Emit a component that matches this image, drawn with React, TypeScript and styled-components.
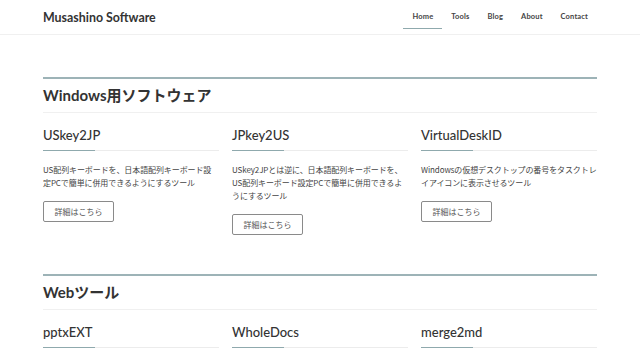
import React from "react";
import styled, { createGlobalStyle } from "styled-components";

const Global = createGlobalStyle`
  html, body { margin: 0; padding: 0; background: #fff; }
  body {
    font-family: Lato, "Noto Sans CJK JP", sans-serif;
    color: #333;
  }
  * { box-sizing: border-box; }
`;

const Header = styled.header`
  height: 35px;
  border-bottom: 1px solid #f0f0f0;
`;

const HeaderInner = styled.div`
  width: 554px;
  margin: 0 auto;
  height: 34px;
  display: flex;
  align-items: center;
  justify-content: space-between;
`;

const Brand = styled.div`
  font-size: 12.4px;
  font-weight: 700;
  color: #333;
`;

const Nav = styled.nav`
  display: flex;
  height: 34px;
  align-items: stretch;
`;

const NavItem = styled.a<{ $active?: boolean }>`
  display: flex;
  align-items: center;
  padding: 0 9px;
  font-size: 7.5px;
  font-weight: 700;
  letter-spacing: 0.15px;
  color: #444;
  text-decoration: none;
  border-bottom: 1px solid ${(p) => (p.$active ? "#8fa9ad" : "transparent")};
  margin-bottom: 5px;
  padding-top: 5px;
`;

const Main = styled.main`
  width: 554px;
  margin: 0 auto;
  padding-top: 42px;
  display: flex;
  flex-direction: column;
  gap: 39px;
`;

const Section = styled.section`
  border-top: 2px solid #9db3b7;
`;

const SectionTitle = styled.h2`
  margin: 0;
  font-size: 15px;
  font-weight: 700;
  line-height: 20px;
  padding: 6px 0 7px;
  border-bottom: 1px solid #f0f0f0;
  color: #333;
`;

const Grid = styled.div`
  display: grid;
  grid-template-columns: repeat(3, 1fr);
  column-gap: 13px;
  padding-top: 14px;
`;

const Card = styled.div`
  display: flex;
  flex-direction: column;
  align-items: flex-start;
`;

const CardTitle = styled.h3`
  margin: 0;
  align-self: stretch;
  font-size: 13px;
  font-weight: 500;
  line-height: 16px;
  padding-bottom: 7px;
  border-bottom: 1px solid #ececec;
  position: relative;
  color: #333;
  &::after {
    content: "";
    position: absolute;
    left: 0;
    bottom: -1px;
    width: 52px;
    height: 1px;
    background: #8fa9ad;
  }
`;

const Desc = styled.p`
  margin: 12px 0 0;
  font-family: "Noto Sans CJK JP", sans-serif;
  font-size: 8px;
  line-height: 13px;
  letter-spacing: -0.1px;
  color: #444;
`;

const Button = styled.a`
  margin-top: 12px;
  display: inline-flex;
  align-items: center;
  justify-content: center;
  width: 71px;
  height: 21px;
  border: 1px solid #8a8a8a;
  border-radius: 2px;
  font-family: "Noto Sans CJK JP", sans-serif;
  font-size: 8px;
  color: #555;
  text-decoration: none;
`;

type Tool = { name: string; desc?: string };

const windows: Tool[] = [
  { name: "USkey2JP", desc: "US配列キーボードを、日本語配列キーボード設定PCで簡単に併用できるようにするツール" },
  { name: "JPkey2US", desc: "USkey2JPとは逆に、日本語配列キーボードを、US配列キーボード設定PCで簡単に併用できるようにするツール" },
  { name: "VirtualDeskID", desc: "Windowsの仮想デスクトップの番号をタスクトレイアイコンに表示させるツール" },
];

const web: Tool[] = [
  { name: "pptxEXT" },
  { name: "WholeDocs" },
  { name: "merge2md" },
];

const ToolSection = ({ title, tools }: { title: string; tools: Tool[] }) => (
  <Section>
    <SectionTitle>{title}</SectionTitle>
    <Grid>
      {tools.map((t) => (
        <Card key={t.name}>
          <CardTitle>{t.name}</CardTitle>
          {t.desc ? (
            <>
              <Desc>{t.desc}</Desc>
              <Button href="#">詳細はこちら</Button>
            </>
          ) : null}
        </Card>
      ))}
    </Grid>
  </Section>
);

export default function App() {
  return (
    <>
      <Global />
      <Header>
        <HeaderInner>
          <Brand>Musashino Software</Brand>
          <Nav>
            <NavItem href="#" $active>Home</NavItem>
            <NavItem href="#">Tools</NavItem>
            <NavItem href="#">Blog</NavItem>
            <NavItem href="#">About</NavItem>
            <NavItem href="#">Contact</NavItem>
          </Nav>
        </HeaderInner>
      </Header>
      <Main>
        <ToolSection title="Windows用ソフトウェア" tools={windows} />
        <ToolSection title="Webツール" tools={web} />
      </Main>
    </>
  );
}
